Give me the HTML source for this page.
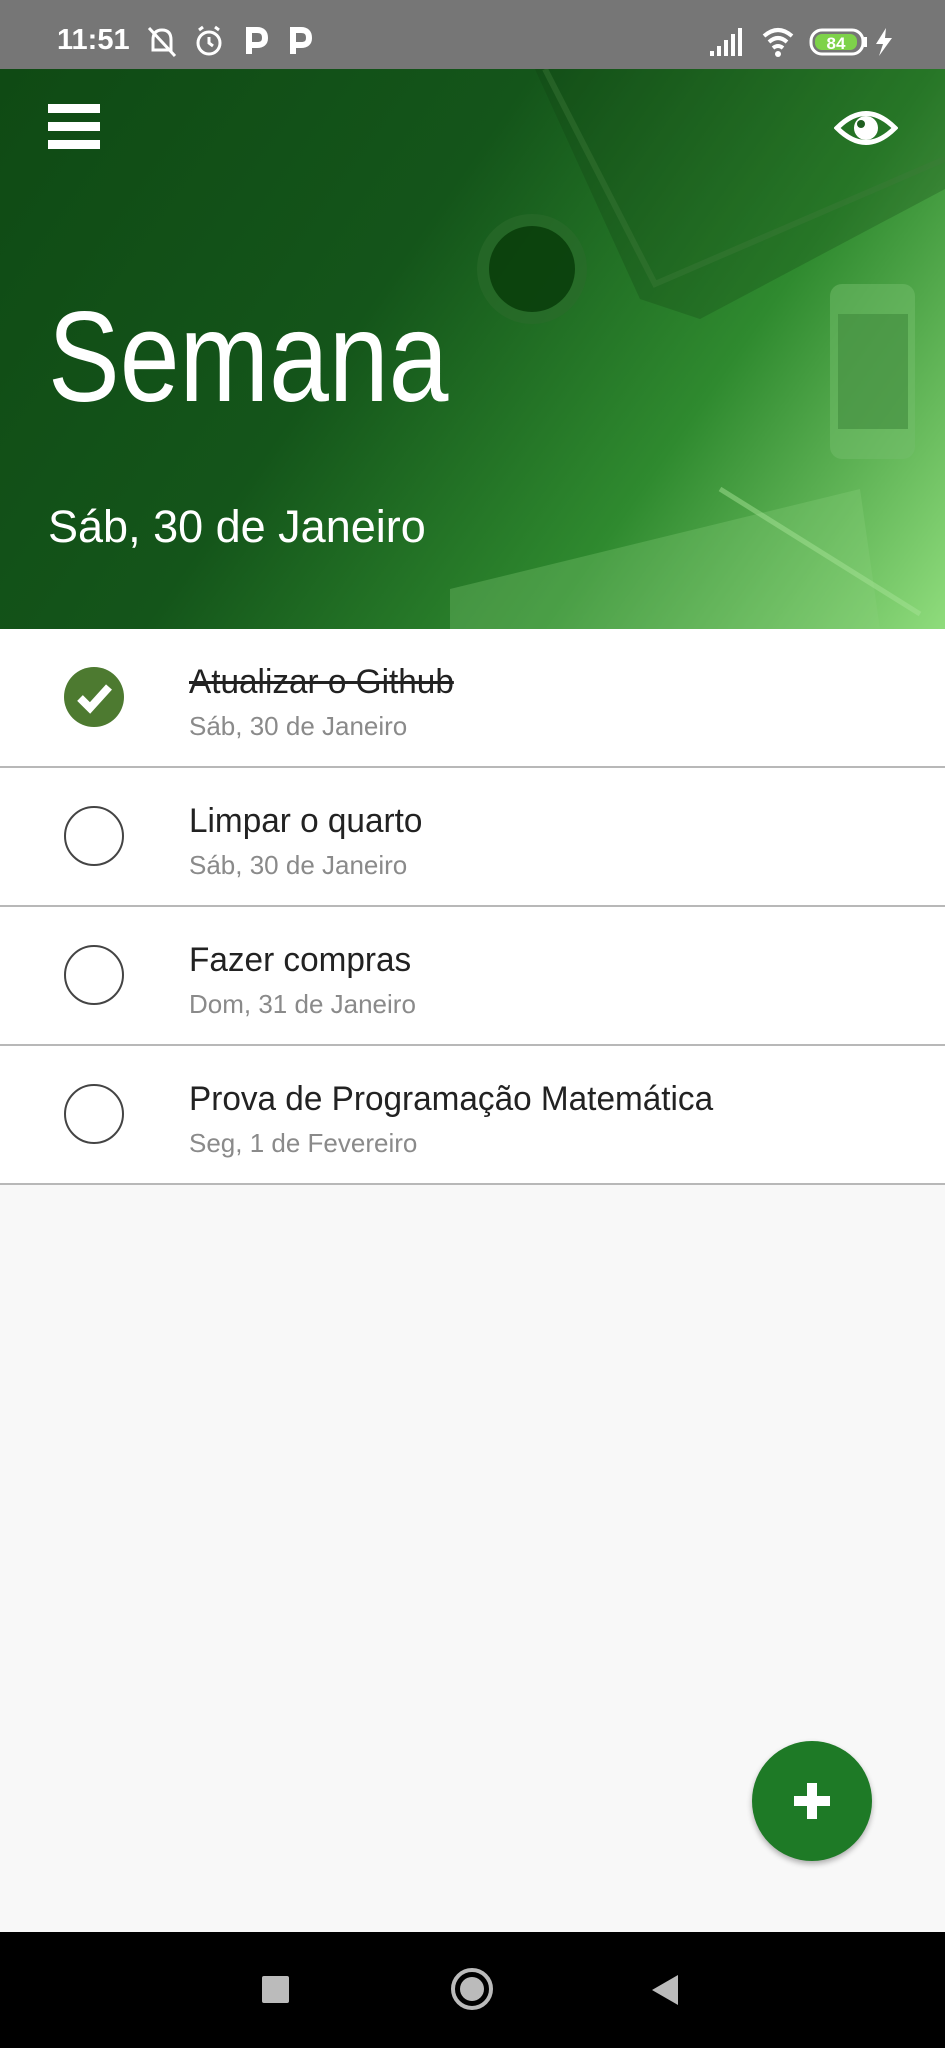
<!DOCTYPE html>
<html><head><meta charset="utf-8"><style>
*{margin:0;padding:0;box-sizing:border-box}
body{width:945px;height:2048px;overflow:hidden;background:#f8f8f8;font-family:"Liberation Sans",sans-serif;position:relative}
.status{position:absolute;left:0;top:0;width:945px;height:69px;background:#767676;color:#fff}
.header{position:absolute;left:0;top:69px;width:945px;height:560px;background:linear-gradient(125deg,#0f4a14 0%,#14551a 40%,#2f8a2f 70%,#8fdc7c 100%);overflow:hidden}
.row{position:absolute;left:0;width:945px;height:139px;background:#fff;border-bottom:2px solid #b8b8b8}
.circ{position:absolute;left:64px;top:38px;width:60px;height:60px;border:2.5px solid #444;border-radius:50%}
.t{position:absolute;left:189px;top:34px;font-size:34px;color:#222;transform:scaleX(.98);transform-origin:left}
.d{position:absolute;left:189px;top:82px;font-size:26px;color:#8a8a8a}
.nav{position:absolute;left:0;top:1932px;width:945px;height:116px;background:#000}
</style></head><body>
<div class="status">
 <div style="position:absolute;left:57px;top:24px;font-size:29px;font-weight:bold">11:51</div>
 <svg style="position:absolute;left:145px;top:24px" width="190" height="36" viewBox="0 0 190 36" fill="none" stroke="#fff" stroke-width="3">
  <path d="M8 26 L8 16 Q8 6 17 6 Q26 6 26 16 L26 26 Z M4 4 L30 32"/>
  <circle cx="64" cy="19" r="11"/><path d="M64 13 L64 19 L68 22 M54 6 L58 3 M74 6 L70 3"/>
  <path d="M104 30 L104 6 L112 6 Q120 6 120 14 Q120 21 112 21 L104 21" stroke-width="6"/>
  <path d="M148 30 L148 6 L156 6 Q164 6 164 14 Q164 21 156 21 L148 21" stroke-width="6"/>
 </svg>
 <svg style="position:absolute;left:708px;top:24px" width="195" height="36" viewBox="0 0 195 36">
  <path d="M2 32 L2 27 L6 27 L6 32 Z M9 32 L9 22 L13 22 L13 32 Z M16 32 L16 16 L20 16 L20 32 Z M23 32 L23 10 L27 10 L27 32 Z M30 32 L30 4 L34 4 L34 32 Z" fill="#fff"/>
  <path d="M56 12 Q70 0 84 12 M61 18 Q70 10 79 18 M65 24 Q70 20 75 24" stroke="#fff" stroke-width="4" fill="none"/><circle cx="70" cy="30" r="3" fill="#fff"/>
  <rect x="103" y="6" width="52" height="24" rx="11" fill="none" stroke="#fff" stroke-width="3"/>
  <rect x="107" y="10" width="42" height="16" rx="7" fill="#7ed24a"/>
  <text x="128" y="25" font-family="Liberation Sans" font-size="17" font-weight="bold" fill="#fff" text-anchor="middle">84</text>
  <rect x="156" y="13" width="3" height="10" fill="#fff"/>
  <path d="M178 4 L168 20 L175 20 L171 32 L184 14 L177 14 Z" fill="#fff"/>
 </svg>
</div>
<div class="header">
 <svg style="position:absolute;left:0;top:0" width="945" height="560" viewBox="0 0 945 560">
  <path d="M535 0 L945 0 L945 120 L700 250 L640 230 Z" fill="#0e3b11" opacity=".25"/>
  <path d="M545 0 L655 215 L945 90" fill="none" stroke="#3e7a3a" stroke-width="6" opacity=".4"/>
  <circle cx="532" cy="200" r="55" fill="#2c6a2b" opacity=".6"/><circle cx="532" cy="200" r="43" fill="#063a08" opacity=".8"/>
  <rect x="830" y="215" width="85" height="175" rx="12" fill="#74bd6c" opacity=".5"/><rect x="838" y="245" width="70" height="115" fill="#3f8a3c" opacity=".6"/>
  <path d="M450 520 L860 420 L880 560 L450 560 Z" fill="#8cd27e" opacity=".3"/>
  <path d="M720 420 L920 545" stroke="#a5e295" stroke-width="5" opacity=".5"/>
 </svg>
 <div style="position:absolute;left:48px;top:35px;width:52px;height:9px;background:#fff"></div>
 <div style="position:absolute;left:48px;top:53px;width:52px;height:9px;background:#fff"></div>
 <div style="position:absolute;left:48px;top:71px;width:52px;height:9px;background:#fff"></div>
 <svg style="position:absolute;left:834px;top:38px" width="64" height="42" viewBox="0 0 64 42">
  <path d="M3 21 Q32 -8 61 21 Q32 50 3 21 Z" fill="none" stroke="#fff" stroke-width="5"/>
  <circle cx="32" cy="21" r="12" fill="#fff"/><circle cx="27" cy="17" r="4" fill="#1f5e20"/>
 </svg>
 <div style="position:absolute;left:48px;top:225px;font-size:128px;color:#fff;line-height:1;transform:scaleX(.84);transform-origin:left">Semana</div>
 <div style="position:absolute;left:48px;top:435px;font-size:45px;color:#fff;line-height:1">Sáb, 30 de Janeiro</div>
</div>
<div class="row" style="top:629px">
 <svg style="position:absolute;left:64px;top:38px" width="60" height="60" viewBox="0 0 60 60"><circle cx="30" cy="30" r="30" fill="#4d7a30"/><path d="M16 31 L26 41 L45 20" stroke="#fff" stroke-width="8" fill="none"/></svg>
 <div class="t" style="text-decoration:line-through">Atualizar o Github</div><div class="d">Sáb, 30 de Janeiro</div>
</div>
<div class="row" style="top:768px"><div class="circ"></div><div class="t">Limpar o quarto</div><div class="d">Sáb, 30 de Janeiro</div></div>
<div class="row" style="top:907px"><div class="circ"></div><div class="t">Fazer compras</div><div class="d">Dom, 31 de Janeiro</div></div>
<div class="row" style="top:1046px"><div class="circ"></div><div class="t">Prova de Programação Matemática</div><div class="d">Seg, 1 de Fevereiro</div></div>
<div style="position:absolute;left:752px;top:1741px;width:120px;height:120px;border-radius:50%;background:#1e7a26;box-shadow:0 3px 6px rgba(0,0,0,.3)">
 <div style="position:absolute;left:42px;top:55px;width:36px;height:10px;background:#fff"></div>
 <div style="position:absolute;left:55px;top:42px;width:10px;height:36px;background:#fff"></div>
</div>
<div class="nav">
 <div style="position:absolute;left:262px;top:44px;width:27px;height:27px;background:#bbb;border-radius:2px"></div>
 <div style="position:absolute;left:451px;top:36px;width:42px;height:42px;border:4px solid #bbb;border-radius:50%"><div style="position:absolute;left:5px;top:5px;width:24px;height:24px;background:#bbb;border-radius:50%"></div></div>
 <svg style="position:absolute;left:650px;top:41px" width="30" height="34" viewBox="0 0 30 34"><path d="M28 2 L28 32 L2 17 Z" fill="#bbb"/></svg>
</div>
</body></html>
